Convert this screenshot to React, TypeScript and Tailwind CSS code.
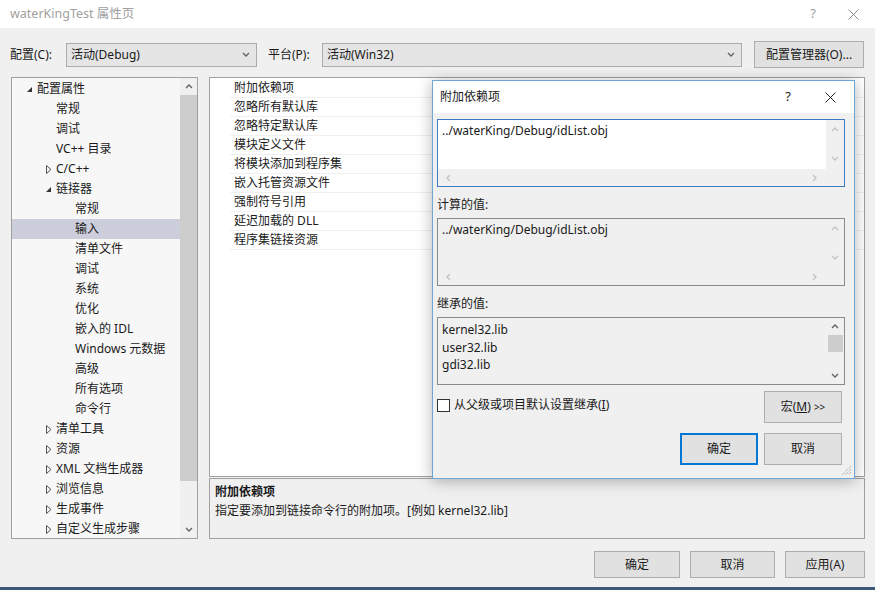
import React from "react";

const treeItems = [
  { label: "配置属性", level: 0, arrow: "open" },
  { label: "常规", level: 1 },
  { label: "调试", level: 1 },
  { label: "VC++ 目录", level: 1 },
  { label: "C/C++", level: 1, arrow: "closed" },
  { label: "链接器", level: 1, arrow: "open" },
  { label: "常规", level: 2 },
  { label: "输入", level: 2, selected: true },
  { label: "清单文件", level: 2 },
  { label: "调试", level: 2 },
  { label: "系统", level: 2 },
  { label: "优化", level: 2 },
  { label: "嵌入的 IDL", level: 2 },
  { label: "Windows 元数据", level: 2 },
  { label: "高级", level: 2 },
  { label: "所有选项", level: 2 },
  { label: "命令行", level: 2 },
  { label: "清单工具", level: 1, arrow: "closed" },
  { label: "资源", level: 1, arrow: "closed" },
  { label: "XML 文档生成器", level: 1, arrow: "closed" },
  { label: "浏览信息", level: 1, arrow: "closed" },
  { label: "生成事件", level: 1, arrow: "closed" },
  { label: "自定义生成步骤", level: 1, arrow: "closed" },
];

const props = [
  "附加依赖项",
  "忽略所有默认库",
  "忽略特定默认库",
  "模块定义文件",
  "将模块添加到程序集",
  "嵌入托管资源文件",
  "强制符号引用",
  "延迟加载的 DLL",
  "程序集链接资源",
];

const chevrons: Record<string, string> = {
  up: "M1 5 L4 2 L7 5",
  down: "M1 2 L4 5 L7 2",
  left: "M5 1 L2 4 L5 7",
  right: "M2 1 L5 4 L2 7",
};

function Chev({ dir, dim }: { dir: string; dim?: boolean }) {
  return (
    <svg width="8" height="8" viewBox="0 0 8 8">
      <path d={chevrons[dir]} fill="none" stroke={dim ? "#c2c2c2" : "#606060"} strokeWidth="1.3" />
    </svg>
  );
}

function TreeArrow({ kind }: { kind?: string }) {
  if (kind === "open")
    return (
      <svg width="7" height="7" viewBox="0 0 7 7">
        <path d="M6 1 L6 6 L1 6 Z" fill="#333" />
      </svg>
    );
  if (kind === "closed")
    return (
      <svg width="6" height="9" viewBox="0 0 6 9">
        <path d="M0.5 0.5 L5 4.5 L0.5 8.5 Z" fill="none" stroke="#555" strokeWidth="1" />
      </svg>
    );
  return null;
}

function Combo({ text, className }: { text: string; className: string }) {
  return (
    <div className={"flex h-[24px] items-center justify-between border border-[#acacac] bg-[#e5e5e5] pl-[4px] pr-[6px] " + className}>
      <span>{text}</span>
      <Chev dir="down" />
    </div>
  );
}

function Btn({ children, className }: { children: React.ReactNode; className: string }) {
  return (
    <div className={"flex h-[27px] items-center justify-center border border-[#adadad] bg-[#e1e1e1] " + className}>
      {children}
    </div>
  );
}

function TextBox({
  text,
  className,
  hbar,
  dim,
}: {
  text: React.ReactNode;
  className: string;
  hbar?: boolean;
  dim?: boolean;
}) {
  return (
    <div className={"relative h-[68px] w-[408px] border " + className}>
      <div className="px-[4px] pt-[2px] leading-[17px]">{text}</div>
      <div className="absolute right-0 top-0 flex h-[49px] w-[18px] flex-col items-center justify-between bg-[#f0f0f0] py-[6px]">
        <Chev dir="up" dim={dim} />
        <Chev dir="down" dim={dim} />
      </div>
      {hbar && (
        <div className="absolute bottom-0 left-0 flex h-[17px] w-full items-center justify-between bg-[#f0f0f0] pl-[7px] pr-[25px]">
          <Chev dir="left" dim />
          <Chev dir="right" dim />
        </div>
      )}
    </div>
  );
}

export default function App() {
  return (
    <div className="relative flex h-[590px] w-[875px] flex-col overflow-hidden bg-[#f0f0f0] font-['Noto_Sans','Noto_Sans_CJK_SC',sans-serif] text-[12px] text-[#1a1a1a]">
      {/* window title */}
      <div className="flex h-[28px] shrink-0 items-center justify-between bg-white pl-[10px] pr-[16px] text-[#a0a0a0]">
        <span className="text-[12.5px]">waterKingTest 属性页</span>
        <div className="flex items-center gap-[32px]">
          <span className="text-[13px]">?</span>
          <svg width="11" height="11" viewBox="0 0 11 11">
            <path d="M0.5 0.5 L10.5 10.5 M10.5 0.5 L0.5 10.5" stroke="#8a8a8a" strokeWidth="1" />
          </svg>
        </div>
      </div>

      {/* config bar */}
      <div className="mt-[13px] flex h-[27px] shrink-0 items-center pl-[10px]">
        <span className="w-[56px]">配置(C):</span>
        <Combo text="活动(Debug)" className="w-[191px]" />
        <span className="ml-[11px] w-[54px]">平台(P):</span>
        <Combo text="活动(Win32)" className="w-[420px]" />
        <Btn className="ml-[12px] w-[110px]">配置管理器(O)...</Btn>
      </div>

      {/* main area */}
      <div className="mt-[9px] flex shrink-0 gap-[11px] pl-[11px]">
        <div className="flex h-[462px] w-[187px] border border-[#a0a0a0] bg-[#f7f7f7]">
          <div className="flex-1 pt-[1px]">
            {treeItems.map((item, i) => (
              <div
                key={i}
                className={
                  "flex h-[20px] items-center " + (item.selected ? "bg-[#cccedb]" : "")
                }
              >
                <div
                  className={
                    item.level === 0
                      ? "flex w-[25px] justify-end pr-[4px]"
                      : item.level === 1
                        ? "flex w-[44px] justify-end pr-[4px]"
                        : "w-[63px]"
                  }
                >
                  <TreeArrow kind={item.arrow} />
                </div>
                <span>{item.label}</span>
              </div>
            ))}
          </div>
          <div className="flex w-[17px] flex-col items-center bg-[#f0f0f0]">
            <div className="flex h-[17px] items-center">
              <Chev dir="up" />
            </div>
            <div className="h-[386px] w-full bg-[#cdcdcd]" />
            <div className="flex-1" />
            <div className="flex h-[17px] items-center">
              <Chev dir="down" />
            </div>
          </div>
        </div>

        <div className="flex w-[656px] flex-col gap-[1px]">
          <div className="h-[400px] border border-[#a0a0a0] bg-white pt-[1px]">
            {props.map((p) => (
              <div key={p} className="flex h-[19px] items-center">
                <div className="w-[20px]" />
                <div className="flex h-full flex-1 items-center border-b border-[#f0f0f0] pl-[4px]">
                  {p}
                </div>
              </div>
            ))}
          </div>
          <div className="h-[61px] border border-[#a0a0a0] bg-[#f0f0f0] px-[5px] pt-[3px] leading-[19px]">
            <div className="font-bold">附加依赖项</div>
            <div>指定要添加到链接命令行的附加项。[例如 kernel32.lib]</div>
          </div>
        </div>
      </div>

      {/* bottom buttons */}
      <div className="mt-[12px] flex shrink-0 justify-end gap-[10px] pr-[10px]">
        <Btn className="w-[86px]">确定</Btn>
        <Btn className="w-[85px]">取消</Btn>
        <Btn className="w-[80px]">应用(A)</Btn>
      </div>
      <div className="mt-auto h-[3px] bg-[#3b5878]" />

      {/* child dialog */}
      <div className="absolute left-[432px] top-[80px] flex h-[399px] w-[423px] flex-col border border-[#6fa6d8] bg-[#f0f0f0] shadow-[0_2px_14px_rgba(0,0,0,0.3)]">
        <div className="flex h-[32px] shrink-0 items-center justify-between bg-white pl-[7px] pr-[18px]">
          <span>附加依赖项</span>
          <div className="flex items-center gap-[34px]">
            <span className="text-[13px]">?</span>
            <svg width="11" height="11" viewBox="0 0 11 11">
              <path d="M0.5 0.5 L10.5 10.5 M10.5 0.5 L0.5 10.5" stroke="#222" strokeWidth="1" />
            </svg>
          </div>
        </div>
        <div className="flex flex-col px-[4px] pt-[6px]">
          <TextBox
            text="../waterKing/Debug/idList.obj"
            className="border-[#3d7bc4] bg-white"
            hbar
            dim
          />
          <div className="flex h-[31px] items-end pb-[4px]">计算的值:</div>
          <TextBox
            text="../waterKing/Debug/idList.obj"
            className="border-[#8a8a8a] bg-[#f0f0f0]"
            hbar
            dim
          />
          <div className="flex h-[31px] items-end pb-[4px]">继承的值:</div>
          <div className="relative h-[68px] w-[408px] border border-[#8a8a8a] bg-[#f0f0f0]">
            <div className="px-[4px] pt-[3px] leading-[17.5px]">
              <div>kernel32.lib</div>
              <div>user32.lib</div>
              <div>gdi32.lib</div>
            </div>
            <div className="absolute right-0 top-0 flex h-full w-[18px] flex-col items-center bg-[#f0f0f0]">
              <div className="flex h-[17px] items-center">
                <Chev dir="up" />
              </div>
              <div className="h-[17px] w-[15px] bg-[#cdcdcd]" />
              <div className="flex-1" />
              <div className="flex h-[17px] items-center">
                <Chev dir="down" />
              </div>
            </div>
          </div>

          <div className="mt-[6px] flex items-start justify-between pr-[8px]">
            <div className="mt-[5px] flex items-center gap-[4px]">
              <div className="h-[13px] w-[13px] border border-[#333] bg-white" />
              <span>
                从父级或项目默认设置继承(<span className="underline">I</span>)
              </span>
            </div>
            <Btn className="!h-[32px] w-[78px]">
              <span>
                宏(<span className="underline">M</span>) <span className="text-[10px]">&gt;&gt;</span>
              </span>
            </Btn>
          </div>
          <div className="mt-[10px] flex justify-end gap-[6px] pr-[8px]">
            <Btn className="!h-[32px] w-[78px] border-2 !border-[#0078d7]">确定</Btn>
            <Btn className="!h-[32px] w-[78px]">取消</Btn>
          </div>
        </div>
        <svg className="absolute bottom-[2px] right-[2px]" width="10" height="10" viewBox="0 0 10 10">
          <path d="M9 3 L3 9 M9 6 L6 9 M9 0 L0 9" stroke="#9a9a9a" strokeWidth="1" strokeDasharray="1 1" />
        </svg>
      </div>
    </div>
  );
}
